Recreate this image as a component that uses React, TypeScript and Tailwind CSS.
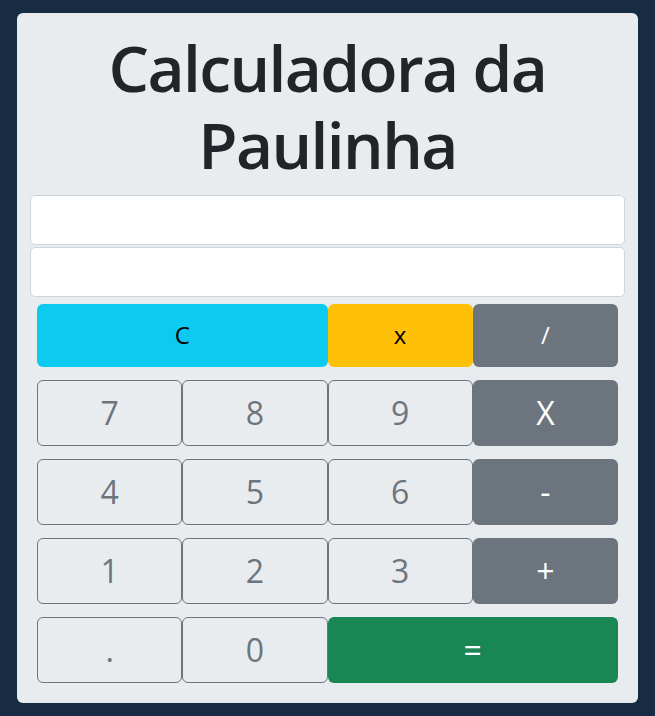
import React from "react";

const outline =
  "h-[66px] flex items-center justify-center rounded-[6px] border border-[#6c757d] text-[#6c757d] text-[32px] leading-none";
const gray =
  "h-[66px] flex items-center justify-center rounded-[6px] bg-[#6c757d] text-white text-[32px] leading-none";

export default function App() {
  return (
    <div
      className="w-[655px] h-[716px] bg-[#172c43] pt-[13px] pl-[17px]"
      style={{ fontFamily: '"Open Sans", "Noto Sans", sans-serif' }}
    >
      <div className="w-[621px] h-[690px] bg-[#e9ecef] rounded-[6px] pt-[17px] flex flex-col">
        <h1 className="text-center text-[64px] leading-[76.8px] font-semibold text-[#212529] tracking-[-1.6px]">
          Calculadora da
          <br />
          Paulinha
        </h1>
        <div className="px-[13px] mt-[11px] flex flex-col gap-[2px]">
          <input className="h-[50px] bg-white border border-[#ced4da] rounded-[5px] outline-none" />
          <input className="h-[50px] bg-white border border-[#ced4da] rounded-[5px] outline-none" />
        </div>
        <div className="px-[20px] mt-[7px] flex flex-col gap-[13px]">
          <div className="grid grid-cols-4 h-[63px] text-[24px]">
            <button className="col-span-2 bg-[#0dcaf0] text-black rounded-[6px] flex items-center justify-center">
              C
            </button>
            <button className="bg-[#ffc107] text-black rounded-[6px] flex items-center justify-center">
              x
            </button>
            <button className="bg-[#6c757d] text-white rounded-[6px] flex items-center justify-center">
              /
            </button>
          </div>
          <div className="grid grid-cols-4">
            <button className={outline}>7</button>
            <button className={outline}>8</button>
            <button className={outline}>9</button>
            <button className={gray}>X</button>
          </div>
          <div className="grid grid-cols-4">
            <button className={outline}>4</button>
            <button className={outline}>5</button>
            <button className={outline}>6</button>
            <button className={gray}>-</button>
          </div>
          <div className="grid grid-cols-4">
            <button className={outline}>1</button>
            <button className={outline}>2</button>
            <button className={outline}>3</button>
            <button className={gray}>+</button>
          </div>
          <div className="grid grid-cols-4">
            <button className={outline}>.</button>
            <button className={outline}>0</button>
            <button className="col-span-2 h-[66px] flex items-center justify-center rounded-[6px] bg-[#198754] text-white text-[32px] leading-none">
              =
            </button>
          </div>
        </div>
      </div>
    </div>
  );
}
